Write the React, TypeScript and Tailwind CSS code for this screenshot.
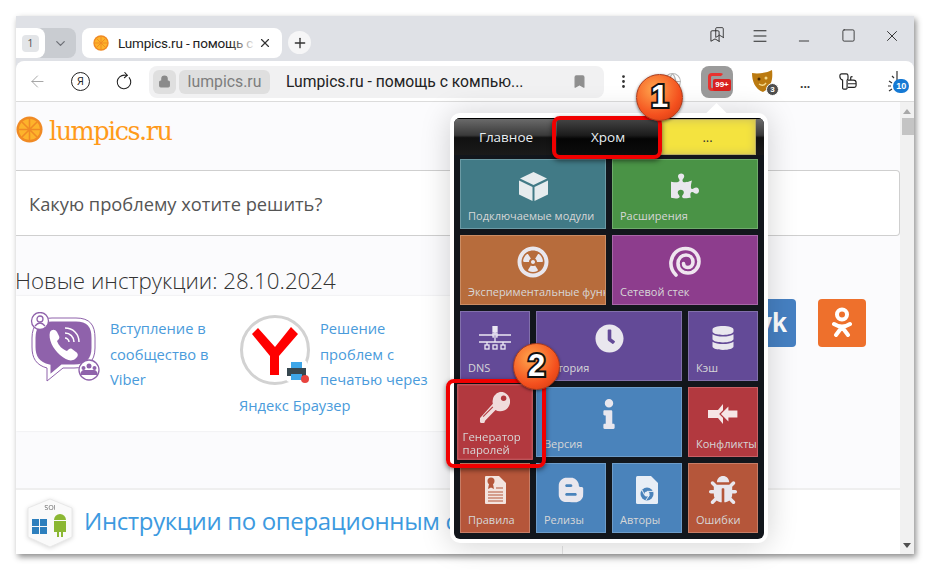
import { FaPuzzlePiece, FaRadiationAlt, FaClock, FaDatabase, FaInfo, FaBloggerB, FaBug } from 'react-icons/fa';
import { X, Plus, ChevronDown, ArrowLeft, RotateCw, Lock, Bookmark, EllipsisVertical, Globe, Menu, Minus, Square } from 'lucide-react';
import type { ReactNode } from 'react';

function Orange({ size }: { size: number }) {
  return (
    <svg width={size} height={size} viewBox="0 0 28 28" className="shrink-0">
      <circle cx="14" cy="14" r="13.5" fill="#f08a24" />
      <circle cx="14" cy="14" r="11" fill="#fdb32b" />
      <g stroke="#f08a24" strokeWidth="1.6">
        <path d="M14 3v22M3 14h22M6.2 6.2l15.6 15.6M21.8 6.2L6.2 21.8" />
      </g>
    </svg>
  );
}

function Cube() {
  return (
    <svg width="29" height="29" viewBox="0 0 29 29" fill="#e6ecee">
      <path d="M14.500 0L28 6.500 14.500 13 1 6.500z" />
      <path d="M0 8.500l13.500 6.500v14L0 22.500z" />
      <path d="M29 8.500L15.500 15v14L29 22.500z" />
    </svg>
  );
}

function Spiral() {
  return (
    <svg width="32" height="32" viewBox="0 0 32 32" fill="none" stroke="#efe6ef" strokeWidth="3.6" strokeLinecap="round">
      <path d="M7 29C3 25 1.500 20 2 15.500 3 8 9 2.500 16.500 2.500 24 2.500 30 8 30 15.500 30 22 25 27 19 27 13 27 9 23 9 17.500 9 12.500 12.500 9 17 9 21 9 24 12 24 16 24 19.500 21.500 21.500 18.500 21.500 16 21.500 14.500 19.500 14.500 17.500" />
    </svg>
  );
}

function DnsIcon() {
  return (
    <svg width="32" height="24" viewBox="0 0 32 24" fill="none" stroke="#ece8f4" strokeWidth="1.300">
      <path d="M0 9h32M0 16h32M16 3v6M8 16v3M24 16v3M16 12v4" />
      <rect x="14" y="0.500" width="4" height="5" fill="#ece8f4" />
      <rect x="14" y="7" width="4" height="4" />
      <rect x="6" y="19" width="4" height="4" />
      <rect x="14" y="19" width="4" height="4" />
      <rect x="22" y="19" width="4" height="4" />
    </svg>
  );
}

function ConflictIcon() {
  return (
    <svg width="30" height="20" viewBox="0 0 30 20" fill="#f6e6e6">
      <path d="M0 6h10L15 0v20l-5-6H0z" />
      <path d="M30 6H21V1L12 10l9 9v-5h9z" stroke="#b2393f" strokeWidth="1.200" />
    </svg>
  );
}

function KeyIcon() {
  return (
    <svg width="28" height="29" viewBox="0 0 28 29" fill="#f0dcdc">
      <path d="M19 0a9 9 0 1 1-4.500 16.800L5 26.500 4 29H1l-1-1v-3.500L12 11a9 9 0 0 1 7-11z" />
      <circle cx="22" cy="6" r="2.500" fill="#b2393f" />
      <path d="M3 23l9-9" stroke="#b2393f" strokeWidth="1" />
    </svg>
  );
}

function RulesDoc() {
  return (
    <svg width="21" height="28" viewBox="0 0 21 28" fill="#f3e4df">
      <path d="M0 1q0-1 1-1h13l7 7v20q0 1-1 1H1q-1 0-1-1z" />
      <circle cx="6" cy="5" r="3.500" fill="#b5563a" />
      <path d="M4 8l-1 5 3-1.500L9 13l-1-5z" fill="#b5563a" />
      <path d="M3 16h15M3 19h15M3 22h15M3 25h15M11 12h7" stroke="#b5563a" strokeWidth="1" />
    </svg>
  );
}

function ChromeFile() {
  return (
    <svg width="22" height="28" viewBox="0 0 22 28">
      <path d="M0 1.500Q0 0 1.500 0H15l7 7v19.500Q22 28 20.500 28h-19Q0 28 0 26.500z" fill="#e8eef6" />
      <circle cx="11" cy="18" r="6.500" fill="#4a83bb" />
      <circle cx="11" cy="18" r="2.600" fill="#e8eef6" />
      <path d="M11 15.400h6M8.700 19.300L6 14M13.300 19.300L10 24" stroke="#e8eef6" strokeWidth="1" />
    </svg>
  );
}

function Tile({ bg, edge, icon, label, span, wrap }: { bg: string; edge: string; icon: ReactNode; label: string; span: string; wrap?: boolean }) {
  return (
    <div className={`${span} ${bg} ${edge} pt-[7px] border h-[70px] flex flex-col items-center overflow-hidden relative`}>
      <div className={`${wrap ? 'h-[26px]' : 'h-[38px]'} flex items-center justify-center text-[#e9e7ee]`}>{icon}</div>
      {wrap ? (
        <div className="absolute left-[4px] bottom-[2px] right-0 text-[10.500px] leading-[12px] text-[#d7d7d7] font-['Open_Sans',sans-serif]">{label}</div>
      ) : (
        <div className="absolute left-[7px] bottom-[6px] right-0 text-[11px] leading-[13px] text-[#d7d7d7] whitespace-nowrap font-['Open_Sans',sans-serif]">{label}</div>
      )}
    </div>
  );
}

function Marker({ n, className }: { n: string; className: string }) {
  return (
    <div className={`absolute w-[47px] h-[47px] rounded-full bg-[radial-gradient(circle_at_38%_32%,#ffa64d,#f4501e_62%,#c9360e)] border border-[#a8391a] shadow-[0_1px_3px_rgba(0,0,0,0.5)] flex items-center justify-center text-white font-bold text-[31px] font-['Liberation_Sans',sans-serif] [-webkit-text-stroke:4px_#111] [paint-order:stroke_fill] ${className}`}>
      {n}
    </div>
  );
}

export default function App() {
  return (
    <div className="w-[930px] h-[570px] bg-white pt-[16px] pl-[16px] overflow-hidden font-['Open_Sans',sans-serif]">
      <div className="w-[898px] h-[538px] flex flex-col bg-[#dfe1e6] shadow-[2px_3px_6px_rgba(0,0,0,0.45)] relative">
        {/* Tabs */}
        <div className="h-[45px] flex items-start">
          <div className="mt-[12px] flex h-[30px] w-[60px] rounded-r-lg bg-[#c9ccd1]">
            <div className="w-[29px] bg-white rounded-r-lg flex items-center justify-center">
              <span className="w-[17px] h-[17px] rounded bg-[#e3e5e8] text-[11px] text-[#555] flex items-center justify-center">1</span>
            </div>
            <div className="flex-1 flex items-center justify-center"><ChevronDown size={15} className="text-[#6d7076]" /></div>
          </div>
          <div className="mt-[12px] ml-[6px] h-[30px] w-[200px] bg-white rounded-lg flex items-center pl-[11px] relative">
            <Orange size={16} />
            <span className="ml-[9px] text-[13.500px] tracking-[-0.2px] text-[#222] font-['Roboto',sans-serif] whitespace-nowrap overflow-hidden w-[138px]">Lumpics.ru - помощь с к</span>
            <div className="absolute left-[148px] top-0 h-full w-[26px] bg-gradient-to-r from-transparent to-white" />
            <X size={14} className="absolute right-[10px] text-[#333]" />
          </div>
          <div className="mt-[15px] ml-[6px] w-[23px] h-[23px] rounded-full bg-[#f6f6f7] flex items-center justify-center"><Plus size={16} className="text-[#333]" /></div>
          <div className="ml-auto mt-[6px] flex items-center text-[#222]">
            <div className="w-[44px] h-[20px] flex justify-center relative">
              <Bookmark size={14} strokeWidth={1.5} className="mt-[3px] mr-[3px]" />
              <Bookmark size={13} strokeWidth={1.5} className="absolute top-[0px] left-[19px]" />
            </div>
            <div className="w-[44px] flex justify-center"><Menu size={18} strokeWidth={1.300} /></div>
            <div className="w-[44px] flex justify-center pt-[11px]"><Minus size={16} strokeWidth={1.300} /></div>
            <div className="w-[44px] flex justify-center"><Square size={15} strokeWidth={1.300} /></div>
            <div className="w-[44px] flex justify-center"><X size={18} strokeWidth={1.200} /></div>
          </div>
        </div>

        {/* Toolbar */}
        <div className="h-[41px] bg-white rounded-t-lg border-b border-[#dcdcdc] flex items-center pt-[1px]">
          <ArrowLeft size={19} strokeWidth={1.100} className="ml-[12px] text-[#999]" />
          <div className="ml-[24px] w-[19px] h-[19px] rounded-full border border-[#222] text-[11px] flex items-center justify-center text-[#222]">Я</div>
          <RotateCw size={18} strokeWidth={1.400} className="ml-[25px] -rotate-[40deg] text-[#222]" />
          <div className="ml-[16px] w-[455px] h-[32px] bg-[#f1f1f2] rounded-lg flex items-center pl-[4px] relative">
            <div className="w-[23px] h-[24px] bg-[#dfdfdf] rounded-md flex items-center justify-center"><Lock size={13} fill="#8a8a8a" className="text-[#8a8a8a]" /></div>
            <div className="ml-[3px] w-[91px] h-[24px] bg-[#dfdfdf] rounded-md flex items-center justify-center text-[15.800px] text-[#7d7d7d] font-['Roboto',sans-serif]">lumpics.ru</div>
            <span className="ml-[16px] text-[15.700px] text-[#222] font-['Roboto',sans-serif] whitespace-nowrap">Lumpics.ru - помощь с компью...</span>
            <Bookmark size={15} fill="#8f8f8f" className="absolute right-[17px] text-[#8f8f8f]" />
          </div>
          <EllipsisVertical size={17} className="ml-[11px] text-[#333]" />
          <Globe size={19} strokeWidth={1.300} className="ml-[31px] text-[#b5b5b5]" />
          <div className="ml-[19px] w-[32px] h-[32px] bg-[#9b9b9b] rounded-lg relative">
            <div className="absolute left-[7px] top-[7px] w-[16px] h-[18px] rounded-[4px] border-[3px] border-[#e8322f] border-r-transparent" />
            <div className="absolute left-[12px] top-[13px] w-[18px] h-[12px] rounded-[2px] bg-[#d9201f] text-white text-[8px] leading-[12px] font-bold text-center font-['Liberation_Sans',sans-serif]">99+</div>
          </div>
          <div className="ml-[19px] relative w-[23px] h-[24px]">
            <svg width="22" height="23" viewBox="0 0 22 23">
              <path d="M0 3C6 4 15 3 20 0c1 8 0 17-9 22C3 19 0 11 0 3z" fill="#bb7a10" />
              <circle cx="7" cy="9" r="1.500" fill="#4a2c05" /><circle cx="14" cy="8" r="1.500" fill="#f5d98a" />
              <path d="M7 14q4 3 7-1" stroke="#f5d98a" strokeWidth="1.400" fill="none" />
            </svg>
            <div className="absolute right-[-4px] bottom-[-2px] w-[13px] h-[13px] rounded-full bg-[#4e4e4e] border border-white text-white text-[8px] leading-[11px] font-bold text-center font-['Liberation_Sans',sans-serif]">3</div>
          </div>
          <span className="ml-[25px] text-[12px] font-bold text-[#333] leading-none pt-[4px]">...</span>
          <svg width="18" height="19" viewBox="0 0 20 19" fill="none" stroke="#222" strokeWidth="1.300" className="ml-[29px]">
            <path d="M1 3q0-2 2-2h5q2 0 2 2v3q0 1-1 2v9q-.500 1-1.500 1h-2q-1 0-1.500-1V8q-3-1-3-4z" />
            <path d="M10 8h6q3 0 3 3v3q0 2-2 2h-7M10 12h9M13 8V5q0-1 2-1" />
          </svg>
          <div className="ml-[30px] relative w-[20px] h-[24px]">
            <svg width="20" height="22" viewBox="0 0 20 22" stroke="#333" strokeWidth="1.200" fill="none">
              <path d="M10 1v12M2 11l3 2M5 19l-3 2M1 16h3M5 6l2 2" />
            </svg>
            <div className="absolute left-[6px] top-[9px] w-[16px] h-[14px] rounded-full bg-[#1579d4] text-white text-[9px] leading-[14px] font-bold text-center font-['Liberation_Sans',sans-serif]">10</div>
          </div>
        </div>

        {/* Page */}
        <div className="flex-1 flex min-h-0 bg-[#fbfbfd]">
          <div className="flex-1 min-w-0 overflow-hidden">
            <div className="h-[68px] flex items-start pt-[14px]">
              <Orange size={27} />
              <span className="ml-[6px] -mt-[1px] text-[25.500px] leading-[32px] text-[#ff9a1a] font-['DejaVu_Serif',serif] tracking-[-1.500px]">lumpics.ru</span>
            </div>
            <div className="h-[66px] bg-white border border-l-0 border-[#cfcfcf] rounded-r flex items-center pl-[13px] pt-[2px] text-[18.300px] text-[#555]">Какую проблему хотите решить?</div>
            <div className="mt-[29px] h-[31px] text-[22.300px] font-light leading-[31px] text-[#333] -ml-[1px] whitespace-nowrap">Новые инструкции: 28.10.2024</div>
            <div className="flex items-start">
              <div className="w-[440px] h-[135px] bg-white shadow-[0_0_2px_rgba(0,0,0,0.1)] flex pl-[14px] pt-[19px] text-[14.700px] leading-[25.500px] text-[#4a9bdb]">
                <div className="w-[209px] flex">
                  <svg width="70" height="70" viewBox="0 0 70 70" className="shrink-0 mt-[-3px]">
                    <path d="M22 8h24c12 0 17 6 17 18v10c0 13-7 18-19 18H32L19 65V54C8 51 4 45 4 35V26C4 14 10 8 22 8z" fill="#8f62ab" stroke="#fff" strokeWidth="3" />
                    <path d="M22 6h24c14 0 19 7 19 20v10c0 14-8 20-21 20H33L17 69V56C6 53 2 46 2 35V26C2 13 9 6 22 6z" fill="none" stroke="#8f62ab" strokeWidth="1" />
                    <path d="M20 20c2-3 5-3 7 0l2 4c1 2 0 3-2 5 2 5 5 8 10 10 2-2 3-3 5-2l4 3c3 2 2 5-1 7-4 3-9 1-15-4-7-6-12-16-10-23z" fill="#fff" />
                    <path d="M35 16c8 0 14 6 14 14M35 21c5 0 9 4 9 9M35 26c2 0 4 2 4 4" stroke="#fff" strokeWidth="1.500" fill="none" />
                    <circle cx="10" cy="9" r="8.500" fill="#fff" stroke="#8f62ab" strokeWidth="1.300" />
                    <circle cx="10" cy="7" r="3" fill="none" stroke="#8f62ab" strokeWidth="1.300" />
                    <path d="M5 14q5-6 10 0" fill="none" stroke="#8f62ab" strokeWidth="1.300" />
                    <circle cx="59" cy="58" r="10" fill="#fff" stroke="#8f62ab" strokeWidth="1.300" />
                    <circle cx="59" cy="54" r="2.500" fill="#8f62ab" /><circle cx="53.500" cy="56" r="2" fill="#8f62ab" /><circle cx="64.500" cy="56" r="2" fill="#8f62ab" />
                    <path d="M50 63q1-5 4-5h10q3 0 4 5z" fill="#8f62ab" />
                  </svg>
                  <div className="ml-[10px] w-[110px] mt-[1px]">Вступление в сообщество в Viber</div>
                </div>
                <div className="w-[190px] mt-[1px]">
                  <svg width="72" height="72" viewBox="0 0 72 72" className="float-left mr-[9px] -mt-[2px] mb-[3px]">
                    <circle cx="36" cy="36" r="33.500" fill="#fff" stroke="#d2d2d2" strokeWidth="3" />
                    <path d="M13 20l6-6 17 19 16-20 7 7-19 22v19h-9V42z" fill="#ff0000" />
                    <rect x="47" y="46" width="21" height="22" rx="4" fill="#fff" />
                    <rect x="52" y="48" width="11" height="6" fill="#3ea6e8" /><rect x="48" y="54" width="19" height="8" fill="#37474f" /><rect x="52" y="60" width="11" height="6" fill="#3ea6e8" />
                    <circle cx="66" cy="65" r="4" fill="#e8433e" />
                  </svg>
                  Решение проблем с печатью через Яндекс Браузер
                </div>
              </div>
              <div className="ml-[292px] mt-[3px] flex gap-[22px]">
                <div className="w-[48px] h-[48px] bg-[#4680c2] rounded flex items-center justify-end pr-[9px] text-white font-bold text-[27px] leading-none font-['Liberation_Sans',sans-serif]">vk</div>
                <div className="w-[48px] h-[48px] bg-[#ee702c] rounded flex items-center justify-center">
                  <svg width="20" height="32" viewBox="0 0 20 32" fill="none" stroke="#fff" strokeWidth="4" strokeLinecap="round">
                    <circle cx="10" cy="7.500" r="5" />
                    <path d="M2 17q8 5 16 0M10 20l-6 8M10 20l6 8" />
                  </svg>
                </div>
              </div>
            </div>
            <div className="mt-[57px] h-[70px] bg-white border-t-2 border-[#efefef] flex items-start pl-[10px] pt-[8px] relative">
              <svg width="48" height="50" viewBox="0 0 48 50" className="shrink-0 drop-shadow-sm">
                <path d="M24 1l22 9v29l-22 10L2 39V10z" fill="#fafafa" stroke="#e8e8e8" />
                <text x="24" y="13" fontSize="7" textAnchor="middle" fill="#666" transform="rotate(180 24 10)">iOS</text>
                <rect x="6" y="21" width="7" height="7" fill="#2d7fbd" /><rect x="14" y="21" width="7" height="7" fill="#2d7fbd" /><rect x="6" y="29" width="7" height="7" fill="#2d7fbd" /><rect x="14" y="29" width="7" height="7" fill="#2d7fbd" />
                <path d="M28 22a6 6 0 0 1 12 0zM28 23h12v11h-3v5h-2v-5h-2v5h-2v-5h-3z" fill="#8bb733" />
              </svg>
              <span className="ml-[10px] mt-[5px] text-[24px] tracking-[-0.350px] leading-[36px] text-[#3d9ae0] whitespace-nowrap">Инструкции по операционным системам</span>
              <div className="absolute left-[546px] top-[56px] h-[14px] w-px bg-[#e5e5e5]" />
            </div>
          </div>
          <div className="w-[14px] bg-[#f1f1f1] flex flex-col items-center justify-between pt-[7px] pb-[6px] relative">
            <div className="w-0 h-0 border-x-[4px] border-x-transparent border-b-[5px] border-b-[#a8a8a8]" />
            <div className="absolute top-[16px] left-[2px] w-[12px] h-[17px] bg-[#c4c4c4]" />
            <div className="w-0 h-0 border-x-[4px] border-x-transparent border-t-[5px] border-t-[#505050]" />
          </div>
        </div>

        {/* Extension popup */}
        <div className="absolute left-[434px] top-[97px] w-[318px] h-[430px] bg-white rounded-[10px] p-[5px_4px_4px_4px] shadow-[0_2px_30px_rgba(0,0,0,0.18)]">
          <div className="absolute right-[44px] -top-[7px] w-[15px] h-[15px] bg-white rotate-45" />
          <div className="h-full bg-[#12161c] rounded-[6px] flex flex-col overflow-hidden relative">
            <div className="h-[37px] flex bg-[linear-gradient(#6a6a6a,#3a3a3a_45%,#111_52%,#1a1a1a)] text-[13.500px] text-[#e8eef2] border-t border-black">
              <div className="w-[103px] flex items-center justify-center pl-[1px]">Главное</div>
              <div className="w-[102px] flex items-center justify-center bg-[linear-gradient(#444,#1c1c1c_45%,#050505_55%,#0c0c0c)] rounded-[3px]">Хром</div>
              <div className="w-[97px] bg-[#f4e33f] border border-[#b9ad62] flex items-center justify-center text-[13px] text-[#333] leading-none shadow-[inset_0_0_8px_#c9bd5c]">...</div>
            </div>
            <div className="grid grid-cols-4 gap-[6px] px-[6px] pt-[4px]">
              <Tile span="col-span-2" bg="bg-[#417a86]" edge="border-[#6b9aa4]" icon={<Cube />} label="Подключаемые модули" />
              <Tile span="col-span-2" bg="bg-[#4a9346]" edge="border-[#6fac6b]" icon={<FaPuzzlePiece size={28} />} label="Расширения" />
              <Tile span="col-span-2" bg="bg-[#b76c3c]" edge="border-[#cb8d64]" icon={<FaRadiationAlt size={32} />} label="Экспериментальные функции" />
              <Tile span="col-span-2" bg="bg-[#8d3d8d]" edge="border-[#a867a8]" icon={<Spiral />} label="Сетевой стек" />
              <Tile span="" bg="bg-[#634a97]" edge="border-[#8270ac]" icon={<DnsIcon />} label="DNS" />
              <Tile span="col-span-2" bg="bg-[#634a97]" edge="border-[#8270ac]" icon={<FaClock size={29} />} label="История" />
              <Tile span="" bg="bg-[#634a97]" edge="border-[#8270ac]" icon={<FaDatabase size={24} />} label="Кэш" />
              <Tile span="z-10 scale-[1.080] shadow-[0_0_6px_rgba(0,0,0,0.6)]" bg="bg-[#b2393f]" edge="border-[#c96066]" icon={<KeyIcon />} label="Генератор паролей" wrap />
              <Tile span="col-span-2" bg="bg-[#4a83bb]" edge="border-[#6d9cc9]" icon={<FaInfo size={30} />} label="Версия" />
              <Tile span="" bg="bg-[#b2393f]" edge="border-[#c96066]" icon={<ConflictIcon />} label="Конфликты" />
              <Tile span="" bg="bg-[#b5563a]" edge="border-[#c77d66]" icon={<RulesDoc />} label="Правила" />
              <Tile span="" bg="bg-[#4a83bb]" edge="border-[#6d9cc9]" icon={<FaBloggerB size={28} />} label="Релизы" />
              <Tile span="" bg="bg-[#4a83bb]" edge="border-[#6d9cc9]" icon={<ChromeFile />} label="Авторы" />
              <Tile span="" bg="bg-[#b5563a]" edge="border-[#c77d66]" icon={<FaBug size={28} />} label="Ошибки" />
            </div>
          </div>
        </div>

        {/* Annotations */}
        <div className="absolute left-[536px] top-[100px] w-[110px] h-[43px] border-[4px] border-[#f00000] rounded-[8px] shadow-[0_2px_5px_rgba(0,0,0,0.5)]" />
        <div className="absolute left-[430px] top-[363px] w-[100px] h-[89px] border-[4px] border-[#f00000] rounded-[8px] shadow-[0_2px_5px_rgba(0,0,0,0.5)] z-20" />
        <Marker n="1" className="left-[620px] top-[58px]" />
        <Marker n="2" className="left-[497px] top-[327px] z-20" />
      </div>
    </div>
  );
}
